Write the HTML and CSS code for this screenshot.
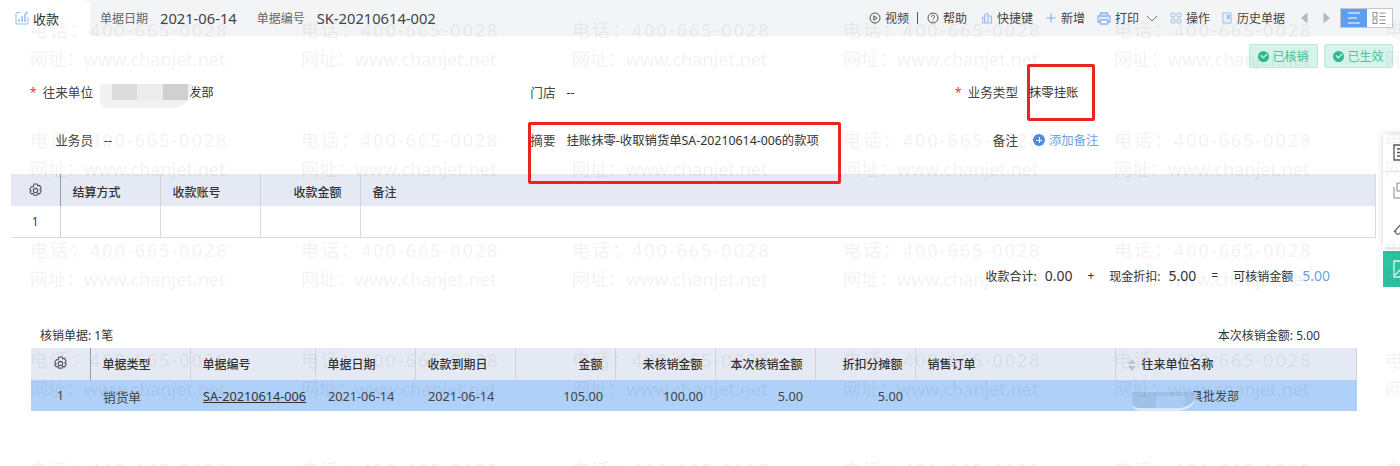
FILE: index.html
```html
<!DOCTYPE html>
<html>
<head>
  <meta charset="UTF-8" />
  <title>收款</title>
  <link rel="stylesheet" href="styles.css">
</head>
<body>
<div id="page">
  <div class="topBar">
    <div class="tab">
      <svg class="tabIcon" viewBox="0 0 14 14"><path d="M5 1.500H2a1 1 0 0 0-1 1V12a1 1 0 0 0 1 1h10a1 1 0 0 0 1-1V6" fill="none" stroke="#8fbaf0"/><path d="M4 11V8M7 11V5M10 11V3" stroke="#5b96e8" fill="none"/><circle cx="11.500" cy="2" r="1.200" fill="#8fbaf0"/></svg>
      <span>收款</span>
    </div>
    <div class="billInfo">
      <span class="billLabel">单据日期</span><span class="billValue">2021-06-14</span>
      <span class="billLabel second">单据编号</span><span class="billValue">SK-20210614-002</span>
    </div>
    <div class="tools">
      <span class="tool"><svg viewBox="0 0 12 12"><circle cx="6" cy="6" r="5" fill="none" stroke="#555"/><path d="M4.800 3.800 8 6 4.800 8.200Z" fill="none" stroke="#555"/></svg>视频</span>
      <span class="toolSep"></span>
      <span class="tool"><svg viewBox="0 0 12 12"><circle cx="6" cy="6" r="5" fill="none" stroke="#555"/><path d="M4.500 4.700a1.500 1.500 0 1 1 2.300 1.300c-.6.4-.8.6-.8 1.300" fill="none" stroke="#555"/><circle cx="6" cy="9" r=".6" fill="#555"/></svg>帮助</span>
      <span class="tool tight"><svg viewBox="0 0 12 12"><path d="M3.500 11V2.500L7 1v10M7 4h3.500v7M1 11h10.500M1.500 11V5.500h2" fill="#dfe9fa" stroke="#9dbdee"/></svg>快捷键</span>
      <span class="tool tight"><svg viewBox="0 0 12 12"><path d="M6 1.500v9M1.500 6h9" stroke="#7dabee" fill="none"/></svg>新增</span>
      <span class="tool"><svg class="wide" viewBox="0 0 14 13"><path d="M3.500 4V1h7v3M3.500 10H1V4h12v6h-2.500" fill="#dfe9fa" stroke="#8fb4ec" stroke-width="1.300"/><path d="M3.500 8h7v4h-7z" fill="#fff" stroke="#8fb4ec" stroke-width="1.300"/></svg>打印</span>
      <svg class="chevron" viewBox="0 0 12 7"><path d="M1 1l5 5 5-5" fill="none" stroke="#777"/></svg>
      <span class="tool tighter"><svg viewBox="0 0 12 12"><g fill="none" stroke="#8fb4ec"><rect x="1" y="1" width="4" height="4" rx="1.500"/><rect x="7" y="1" width="4" height="4" rx="1.500"/><rect x="1" y="7" width="4" height="4" rx="1.500"/><rect x="7" y="7" width="4" height="4" rx="1.500"/></g></svg>操作</span>
      <span class="tool"><svg viewBox="0 0 12 13"><path d="M1.500 1h9v11h-9z" fill="#e6eefb" stroke="#9dbdee"/><path d="M6 3h3v5L7.500 7 6 8z" fill="#9dbdee"/></svg>历史单据</span>
      <svg class="arrow" viewBox="0 0 7 12"><path d="M6.500 0.500v11L0 6z" fill="#b4b8bf"/></svg>
      <svg class="arrow right" viewBox="0 0 7 12"><path d="M0.500 0.500v11L7 6z" fill="#b4b8bf"/></svg>
      <div class="viewToggle">
        <span class="viewBtn on"><svg viewBox="0 0 14 12"><path d="M1 1h12M1 6h9M1 11h12" stroke="#fff" fill="none" stroke-width="1.200"/></svg></span>
        <span class="viewBtn"><svg viewBox="0 0 14 12"><g fill="none" stroke="#8a8f98"><rect x="1" y=".5" width="4" height="4.500"/><rect x="1" y="7" width="4" height="4.500"/><path d="M7.500 1h6M7.500 4.500h6M7.500 8h6M7.500 11.500h6"/></g></svg></span>
      </div>
    </div>
  </div>

  <div class="badges">
    <span class="badge"><i class="check"></i>已核销</span>
    <span class="badge"><i class="check"></i>已生效</span>
  </div>

  <div class="form">
    <div class="field"><label class="must">往来单位</label><span class="fieldTail">发部</span></div>
    <div class="field"><label>门店</label><span>--</span></div>
    <div class="field"><label class="must">业务类型</label><span>抹零挂账</span></div>
    <div class="field"><label>业务员</label><span>--</span></div>
    <div class="field"><label>摘要</label><span>挂账抹零-收取销货单SA-20210614-006的款项</span></div>
    <div class="field"><label>备注</label><span class="addNote"><i class="plus"></i>添加备注</span></div>
  </div>

  <table class="grid settle">
    <thead>
      <tr>
        <th class="cGear"><svg class="gear" viewBox="0 0 14 14"><path d="M5.500 1h3l.6 1.700 1.700-.4 1.500 2.600-1.200 1.300 1.200 1.300-1.500 2.600-1.700-.4-.6 1.700h-3l-.6-1.700-1.700.4L1.700 8.500l1.200-1.300-1.200-1.300 1.500-2.600 1.700.4z" fill="none" stroke="#555"/><circle cx="7" cy="7" r="2" fill="none" stroke="#555"/></svg></th>
        <th class="w100">结算方式</th>
        <th class="w100">收款账号</th>
        <th class="w100 num">收款金额</th>
        <th>备注</th>
      </tr>
    </thead>
    <tbody>
      <tr><td class="cGear">1</td><td></td><td></td><td></td><td></td></tr>
    </tbody>
  </table>

  <div class="totals">
    <span>收款合计:</span><b>0.00</b><em>+</em>
    <span>现金折扣:</span><b>5.00</b><em>=</em>
    <span>可核销金额</span><b class="blue">5.00</b>
  </div>

  <div class="writeOff">
    <div class="writeOffHead"><span>核销单据: 1笔</span><span>本次核销金额: 5.00</span></div>
    <table class="grid bills">
      <thead>
        <tr>
          <th class="cGear"><svg class="gear" viewBox="0 0 14 14"><path d="M5.500 1h3l.6 1.700 1.700-.4 1.500 2.600-1.200 1.300 1.200 1.300-1.500 2.600-1.700-.4-.6 1.700h-3l-.6-1.700-1.700.4L1.700 8.500l1.200-1.300-1.200-1.300 1.500-2.600 1.700.4z" fill="none" stroke="#555"/><circle cx="7" cy="7" r="2" fill="none" stroke="#555"/></svg></th>
          <th class="w100">单据类型</th>
          <th class="w125">单据编号</th>
          <th class="w100">单据日期</th>
          <th class="w100">收款到期日</th>
          <th class="w100 num">金额</th>
          <th class="w100 num">未核销金额</th>
          <th class="w100 num">本次核销金额</th>
          <th class="w100 num">折扣分摊额</th>
          <th class="w200">销售订单</th>
          <th><span class="sortMark"></span>往来单位名称</th>
        </tr>
      </thead>
      <tbody>
        <tr>
          <td class="cGear">1</td>
          <td>销货单</td>
          <td><a href="#">SA-20210614-006</a></td>
          <td>2021-06-14</td>
          <td>2021-06-14</td>
          <td class="num">105.00</td>
          <td class="num">100.00</td>
          <td class="num">5.00</td>
          <td class="num">5.00</td>
          <td></td>
          <td class="custCell">具批发部</td>
        </tr>
      </tbody>
    </table>
  </div>

  <div class="sidePanel">
    <div class="sideCard">
      <span class="sideItem first"><svg viewBox="0 0 18 18"><path d="M1 1h14v15H1zM4 5h9M4 8.500h9M4 12h9" fill="none" stroke="#555" stroke-width="1.300"/></svg></span>
      <span class="sideItem"><svg viewBox="0 0 18 18"><path d="M4 1h9v8H4zM1 5v11h12" fill="none" stroke="#888"/></svg></span>
      <span class="sideItem"><svg viewBox="0 0 18 18"><path d="M1 12 9 3c3-2 6 2 4 4l-7 7c-2 1-4-1-3-3" fill="none" stroke="#666" stroke-width="1.200"/></svg></span>
    </div>
    <div class="sideGreen"><svg viewBox="0 0 18 18"><path d="M1 1h16v16H1zM2 15l5-5 3 2 6-7" fill="none" stroke="#dff5ef" stroke-width="1.300"/></svg></div>
  </div>

  <!-- blurred-out customer names -->
  <div class="smear smearForm"><i></i><i></i><i></i></div>
  <div class="smear smearRow"><i></i></div>

  <!-- review marks drawn over the screenshot -->
  <div class="mark markType"></div>
  <div class="mark markMemo"></div>

  <svg class="watermark" width="1400" height="466">
    <defs>
      <pattern id="wmTile" x="30" y="-79" width="271" height="110" patternUnits="userSpaceOnUse">
        <text x="0" y="116" class="wmText wmPhone">电话：400-665-0028</text>
        <text x="0" y="35" class="wmText">网址：www.chanjet.net</text>
        <text x="0" y="6" class="wmText wmPhone">电话：400-665-0028</text>
      </pattern>
    </defs>
    <rect width="1400" height="466" fill="url(#wmTile)"></rect>
  </svg>
</div>
</body>
</html>
```

FILE: styles.css
```css
* {
  box-sizing: border-box;
}
html, body {
  margin: 0;
  padding: 0;
  background: #fff;
}
#page {
  position: relative;
  width: 1400px;
  height: 466px;
  overflow: hidden;
  font-family: "Noto Sans", "Noto Sans CJK SC", sans-serif;
  font-size: 12px;
  color: #333;
}
/* top bar */
.topBar {
  display: flex;
  align-items: center;
  height: 36px;
  background: #f3f4f6;
}
.tab {
  display: flex;
  align-items: center;
  width: 90px;
  height: 36px;
  padding-left: 15px;
  background: #fff;
  border-top-right-radius: 6px;
  font-size: 13px;
}
.tabIcon {
  width: 14px;
  height: 14px;
  margin-right: 4px;
}
.billInfo {
  display: flex;
  align-items: center;
  padding-left: 10px;
}
.billLabel {
  color: #666;
  margin-right: 12px;
}
.billLabel.second {
  margin-left: 20px;
}
.billValue {
  font-size: 14.7px;
  color: #444;
}
.tools {
  display: flex;
  align-items: center;
  margin-left: auto;
  padding-right: 7px;
  color: #444;
}
.tool {
  display: flex;
  align-items: center;
  margin-right: 14px;
}
.tool.tight {
  margin-right: 12px;
}
.tool.tighter {
  margin-right: 11px;
}
.tool svg {
  width: 12px;
  height: 12px;
  margin-right: 4px;
}
.tool svg.wide {
  width: 14px;
  height: 13px;
}
.toolSep {
  width: 1px;
  height: 12px;
  margin: 0 9px 0 -6px;
  background: #555;
}
.chevron {
  width: 12px;
  height: 7px;
  margin: 0 12px 0 -7px;
}
.arrow {
  width: 7px;
  height: 12px;
  margin: 0 8px 0 2px;
}
.arrow.right {
  margin: 0 10px 0 7px;
}
.viewToggle {
  display: flex;
  width: 53px;
  height: 20px;
  border: 1px solid #c4c7cc;
  background: #fff;
}
.viewBtn {
  display: flex;
  flex: 1;
  align-items: center;
  justify-content: center;
}
.viewBtn.on {
  background: #5e9eef;
}
.viewBtn svg {
  width: 14px;
  height: 12px;
}
/* status badges */
.badges {
  display: flex;
  justify-content: flex-end;
  gap: 6px;
  height: 24px;
  margin-top: 8px;
  padding-right: 7px;
}
.badge {
  display: flex;
  align-items: center;
  justify-content: center;
  width: 69px;
  background: #d6f3ea;
  border: 1px solid #bdeadc;
  border-radius: 2px;
  color: #45c4a2;
  font-size: 12px;
}
.check {
  position: relative;
  width: 11px;
  height: 11px;
  margin-right: 3px;
  border-radius: 50%;
  background: #2dba93;
}
.check:after {
  content: "";
  position: absolute;
  left: 3px;
  top: 2px;
  width: 5px;
  height: 3px;
  border-left: 1.500px solid #fff;
  border-bottom: 1.500px solid #fff;
  transform: rotate(-45deg);
}
/* header form */
.form {
  display: grid;
  grid-template-columns: repeat(3, 462.5px);
  grid-auto-rows: 48px;
  font-size: 12.35px;
}
.field {
  display: flex;
  align-items: center;
}
.field label {
  width: 93px;
  margin: -1px 11px 0 0;
  text-align: right;
  font-size: 12.6px;
  color: #444;
}
.field label.must:before {
  content: "*";
  margin-right: 6px;
  color: #e23c39;
}
.fieldTail {
  margin-left: 85px;
}
.addNote {
  display: flex;
  align-items: center;
  margin-left: 4px;
  color: #6d9fe8;
}
.plus {
  position: relative;
  width: 12px;
  height: 12px;
  margin-right: 4px;
  border-radius: 50%;
  background: #4f8fe6;
}
.plus:before,
.plus:after {
  content: "";
  position: absolute;
  background: #fff;
}
.plus:before {
  left: 3px;
  top: 5.500px;
  width: 6px;
  height: 1px;
}
.plus:after {
  left: 5.500px;
  top: 3px;
  width: 1px;
  height: 6px;
}
/* tables */
.grid {
  border-collapse: collapse;
  table-layout: fixed;
}
.grid th {
  height: 32px;
  padding: 0 12px;
  background: #e5e9f4;
  border-right: 1px solid #cfd2d9;
  text-align: left;
  font-weight: 500;
  color: #333;
}
.grid td {
  height: 31px;
  padding: 0 12px;
  color: #444;
  white-space: nowrap;
}
.grid .cGear {
  width: 49px;
  padding: 0;
  text-align: center;
  border-right: 1px solid #9a9da3;
}
.grid .num {
  text-align: right;
}
.w100 {
  width: 100px;
}
.w125 {
  width: 125px;
}
.w200 {
  width: 200px;
}
.gear {
  display: block;
  width: 15px;
  height: 15px;
  margin: 0 auto;
}
.settle {
  width: 1365px;
  margin: 10px 0 0 11px;
  border-bottom: 1px solid #d9dadd;
  border-right: 1px solid #d9dadd;
}
.settle th {
  padding-top: 3px;
}
.settle th.num {
  padding-right: 18px;
}
.settle th.cGear {
  padding-top: 0;
  border-right-color: #9a9da3;
}
.settle td {
  padding-top: 2px;
  border-right: 1px solid #d9dadd;
}
.settle td.cGear {
  border-right-color: #cfd2d9;
}
.settle th:last-child {
  border-right: 0;
}
/* totals */
.totals {
  display: flex;
  align-items: center;
  justify-content: flex-end;
  height: 24px;
  margin-top: 26px;
  padding-right: 70px;
}
.totals b {
  margin-left: 8px;
  font-size: 14px;
  font-weight: 400;
}
.totals em {
  margin: 0 15px;
  font-style: normal;
}
.totals .blue {
  margin-left: 9px;
  color: #6d9fe8;
}
/* write-off table */
.writeOff {
  margin: 36px 0 0 31px;
  width: 1326px;
}
.writeOffHead {
  display: flex;
  justify-content: space-between;
  height: 24px;
  padding: 2px 37px 0 9px;
}
.bills {
  width: 1326px;
}
.bills .cGear {
  width: 59px;
}
.bills td {
  padding-top: 2px;
  padding-left: 13px;
  font-size: 12.7px;
  background: #afd0f8;
}
.bills td.cGear {
  padding-left: 0;
  font-size: 12px;
  border-right: 0;
}
.bills a {
  color: #333;
}
.bills td.custCell {
  padding-left: 76px;
  font-size: 12px;
}
.sortMark {
  display: inline-block;
  position: relative;
  width: 8px;
  height: 12px;
  margin: 0 6px 0 0;
  vertical-align: -2px;
}
.sortMark:before,
.sortMark:after {
  content: "";
  position: absolute;
  left: 0;
  border-left: 4px solid transparent;
  border-right: 4px solid transparent;
}
.sortMark:before {
  top: 0;
  border-bottom: 5px solid #bfc3ca;
}
.sortMark:after {
  bottom: 0;
  border-top: 5px solid #bfc3ca;
}
/* floating side buttons */
.sidePanel {
  position: absolute;
  left: 1383px;
  top: 134px;
  width: 40px;
}
.sideCard {
  height: 113px;
  background: #fff;
  box-shadow: 0 0 6px rgba(0, 0, 0, 0.18);
}
.sideItem {
  display: flex;
  align-items: center;
  height: 38px;
  padding-left: 10px;
}
.sideItem.first {
  border-bottom: 1px solid #e8e8e8;
}
.sideItem svg,
.sideGreen svg {
  width: 18px;
  height: 18px;
}
.sideGreen {
  display: flex;
  align-items: center;
  height: 36px;
  margin-top: 4px;
  padding-left: 10px;
  background: #2dc2a0;
}
/* smears */
.smear {
  position: absolute;
  display: flex;
  overflow: hidden;
  background: #f1f1f1;
  border-radius: 0 0 20px 8px;
}
.smear i {
  flex: 1;
}
.smearForm {
  left: 100px;
  top: 84px;
  width: 92px;
  height: 24px;
  padding: 0 4px 8px 12px;
}
.smearForm i:nth-child(1) {
  background: #dcdcdc;
}
.smearForm i:nth-child(2) {
  background: #ececec;
}
.smearForm i:nth-child(3) {
  background: #d0d0d0;
}
.smearRow {
  left: 1132px;
  top: 392px;
  width: 65px;
  height: 19px;
  padding: 4px 12px 0 24px;
  background: #a0c0e8;
  border-bottom: 3px solid #dbe8fa;
}
.smearRow i {
  background: #a9cbf4;
}
/* red marks */
.mark {
  position: absolute;
  border: 3px solid #e8261f;
  border-radius: 2px;
}
.markType {
  left: 1027px;
  top: 64px;
  width: 68px;
  height: 57px;
}
.markMemo {
  left: 528px;
  top: 122px;
  width: 313px;
  height: 62px;
}
/* watermark */
.watermark {
  position: absolute;
  left: 0;
  top: 0;
  pointer-events: none;
}
.wmText {
  font-family: "Noto Sans", "Noto Sans CJK SC", sans-serif;
  font-size: 18px;
  fill: rgba(0, 0, 0, 0.05);
}
.wmPhone {
  letter-spacing: 2px;
}
```
